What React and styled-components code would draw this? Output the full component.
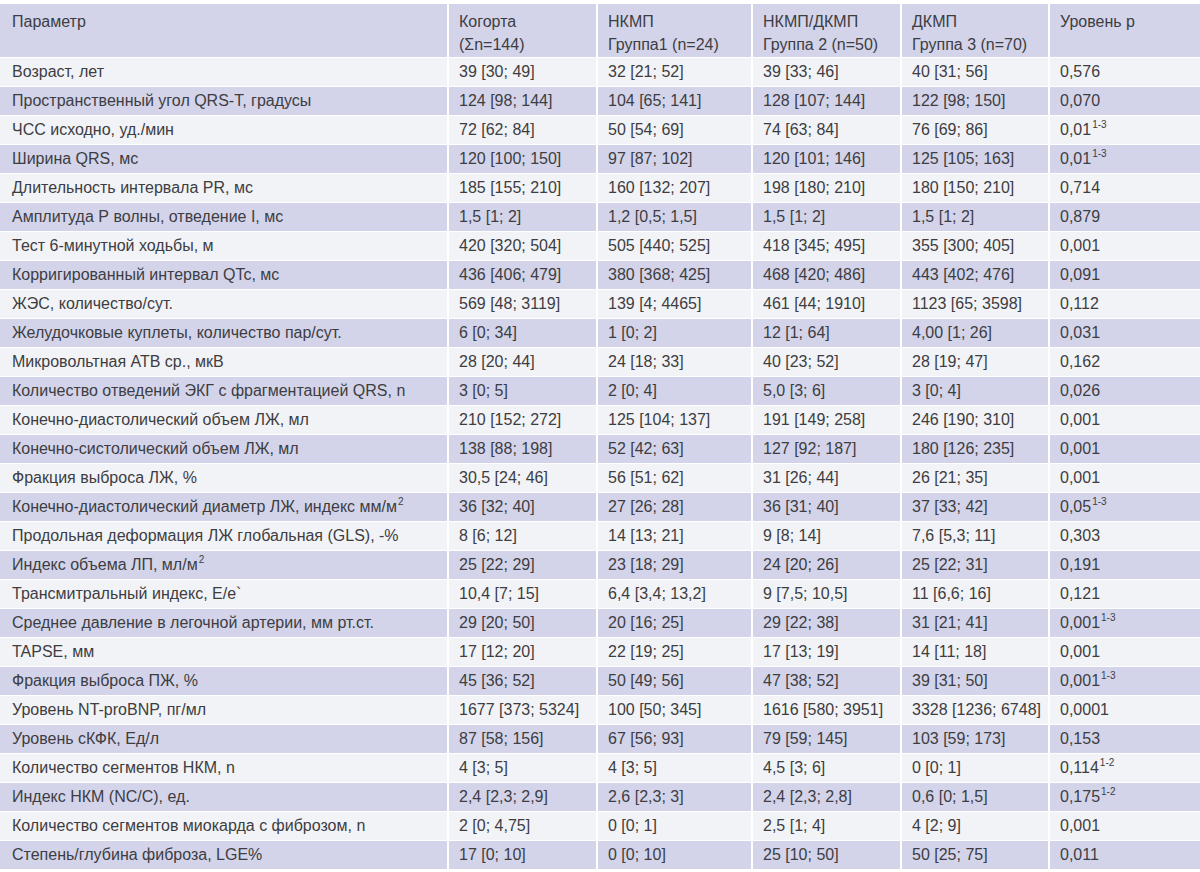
import React from 'react';
import styled, { createGlobalStyle } from 'styled-components';

const GlobalStyle = createGlobalStyle`
  html, body {
    margin: 0;
    padding: 0;
    background: #ffffff;
    overflow: hidden;
  }
  body {
    font-family: "Liberation Sans", Arial, sans-serif;
  }
`;

const columns = [
  { title: 'Параметр', sub: '', width: 447 },
  { title: 'Когорта', sub: '(Σn=144)', width: 147 },
  { title: 'НКМП', sub: 'Группа1 (n=24)', width: 153 },
  { title: 'НКМП/ДКМП', sub: 'Группа 2 (n=50)', width: 147 },
  { title: 'ДКМП', sub: 'Группа 3 (n=70)', width: 146 },
  { title: 'Уровень р', sub: '', width: 150 },
];

// p: [value, superscript]
const rows = [
  ['Возраст, лет', '39 [30; 49]', '32 [21; 52]', '39 [33; 46]', '40 [31; 56]', ['0,576']],
  ['Пространственный угол QRS-T, градусы', '124 [98; 144]', '104 [65; 141]', '128 [107; 144]', '122 [98; 150]', ['0,070']],
  ['ЧСС исходно, уд./мин', '72 [62; 84]', '50 [54; 69]', '74 [63; 84]', '76 [69; 86]', ['0,01', '1-3']],
  ['Ширина QRS, мс', '120 [100; 150]', '97 [87; 102]', '120 [101; 146]', '125 [105; 163]', ['0,01', '1-3']],
  ['Длительность интервала PR, мс', '185 [155; 210]', '160 [132; 207]', '198 [180; 210]', '180 [150; 210]', ['0,714']],
  ['Амплитуда Р волны, отведение I, мс', '1,5 [1; 2]', '1,2 [0,5; 1,5]', '1,5 [1; 2]', '1,5 [1; 2]', ['0,879']],
  ['Тест 6-минутной ходьбы, м', '420 [320; 504]', '505 [440; 525]', '418 [345; 495]', '355 [300; 405]', ['0,001']],
  ['Корригированный интервал QTc, мс', '436 [406; 479]', '380 [368; 425]', '468 [420; 486]', '443 [402; 476]', ['0,091']],
  ['ЖЭС, количество/сут.', '569 [48; 3119]', '139 [4; 4465]', '461 [44; 1910]', '1123 [65; 3598]', ['0,112']],
  ['Желудочковые куплеты, количество пар/сут.', '6 [0; 34]', '1 [0; 2]', '12 [1; 64]', '4,00 [1; 26]', ['0,031']],
  ['Микровольтная АТВ ср., мкВ', '28 [20; 44]', '24 [18; 33]', '40 [23; 52]', '28 [19; 47]', ['0,162']],
  ['Количество отведений ЭКГ с фрагментацией QRS, n', '3 [0; 5]', '2 [0; 4]', '5,0 [3; 6]', '3 [0; 4]', ['0,026']],
  ['Конечно-диастолический объем ЛЖ, мл', '210 [152; 272]', '125 [104; 137]', '191 [149; 258]', '246 [190; 310]', ['0,001']],
  ['Конечно-систолический объем ЛЖ, мл', '138 [88; 198]', '52 [42; 63]', '127 [92; 187]', '180 [126; 235]', ['0,001']],
  ['Фракция выброса ЛЖ, %', '30,5 [24; 46]', '56 [51; 62]', '31 [26; 44]', '26 [21; 35]', ['0,001']],
  [['Конечно-диастолический диаметр ЛЖ, индекс мм/м', '2'], '36 [32; 40]', '27 [26; 28]', '36 [31; 40]', '37 [33; 42]', ['0,05', '1-3']],
  ['Продольная деформация ЛЖ глобальная (GLS), -%', '8 [6; 12]', '14 [13; 21]', '9 [8; 14]', '7,6 [5,3; 11]', ['0,303']],
  [['Индекс объема ЛП, мл/м', '2'], '25 [22; 29]', '23 [18; 29]', '24 [20; 26]', '25 [22; 31]', ['0,191']],
  ['Трансмитральный индекс, Е/е`', '10,4 [7; 15]', '6,4 [3,4; 13,2]', '9 [7,5; 10,5]', '11 [6,6; 16]', ['0,121']],
  ['Среднее давление в легочной артерии, мм рт.ст.', '29 [20; 50]', '20 [16; 25]', '29 [22; 38]', '31 [21; 41]', ['0,001', '1-3']],
  ['TAPSE, мм', '17 [12; 20]', '22 [19; 25]', '17 [13; 19]', '14 [11; 18]', ['0,001']],
  ['Фракция выброса ПЖ, %', '45 [36; 52]', '50 [49; 56]', '47 [38; 52]', '39 [31; 50]', ['0,001', '1-3']],
  ['Уровень NT-proBNP, пг/мл', '1677 [373; 5324]', '100 [50; 345]', '1616 [580; 3951]', '3328 [1236; 6748]', ['0,0001']],
  ['Уровень сКФК, Ед/л', '87 [58; 156]', '67 [56; 93]', '79 [59; 145]', '103 [59; 173]', ['0,153']],
  ['Количество сегментов НКМ, n', '4 [3; 5]', '4 [3; 5]', '4,5 [3; 6]', '0 [0; 1]', ['0,114', '1-2']],
  ['Индекс НКМ (NC/C), ед.', '2,4 [2,3; 2,9]', '2,6 [2,3; 3]', '2,4 [2,3; 2,8]', '0,6 [0; 1,5]', ['0,175', '1-2']],
  ['Количество сегментов миокарда с фиброзом, n', '2 [0; 4,75]', '0 [0; 1]', '2,5 [1; 4]', '4 [2; 9]', ['0,001']],
  ['Степень/глубина фиброза, LGE%', '17 [0; 10]', '0 [0; 10]', '25 [10; 50]', '50 [25; 75]', ['0,011']],
];

const Table = styled.table`
  border-collapse: separate;
  border-spacing: 2px 1px;
  margin-top: 3px;
  margin-left: -2px;
  table-layout: fixed;
  width: 1204px;
  color: #3d3d42;
  font-size: 16px;
`;

const HeadCell = styled.th`
  background: #d3d4ea;
  font-weight: normal;
  text-align: left;
  vertical-align: top;
  height: 53px;
  padding: 6px 10px 0;
  line-height: 23px;
  box-sizing: border-box;
  white-space: nowrap;

  &:first-child {
    padding-left: 12px;
  }
`;

const Row = styled.tr`
  background: ${({ $alt }) => ($alt ? '#d3d4ea' : '#f2f3f6')};
`;

const Cell = styled.td`
  height: 28px;
  padding: 0 10px;
  box-sizing: border-box;
  white-space: nowrap;
  line-height: 28px;

  &:first-child {
    padding-left: 12px;
  }
`;

const Sup = styled.sup`
  font-size: 10px;
  line-height: 0;
  vertical-align: 7px;
  margin-left: 1px;
`;

const withSup = (v) =>
  Array.isArray(v) ? (
    <>
      {v[0]}
      {v[1] && <Sup>{v[1]}</Sup>}
    </>
  ) : (
    v
  );

const App = () => (
  <>
    <GlobalStyle />
    <Table>
      <colgroup>
        {columns.map((c, i) => (
          <col key={i} style={{ width: c.width }} />
        ))}
      </colgroup>
      <thead>
        <tr>
          {columns.map((c, i) => (
            <HeadCell key={i}>
              {c.title}
              {c.sub && <br />}
              {c.sub}
            </HeadCell>
          ))}
        </tr>
      </thead>
      <tbody>
        {rows.map((r, i) => (
          <Row key={i} $alt={i % 2 === 1}>
            {r.map((v, j) => (
              <Cell key={j}>{withSup(v)}</Cell>
            ))}
          </Row>
        ))}
      </tbody>
    </Table>
  </>
);

export default App;
